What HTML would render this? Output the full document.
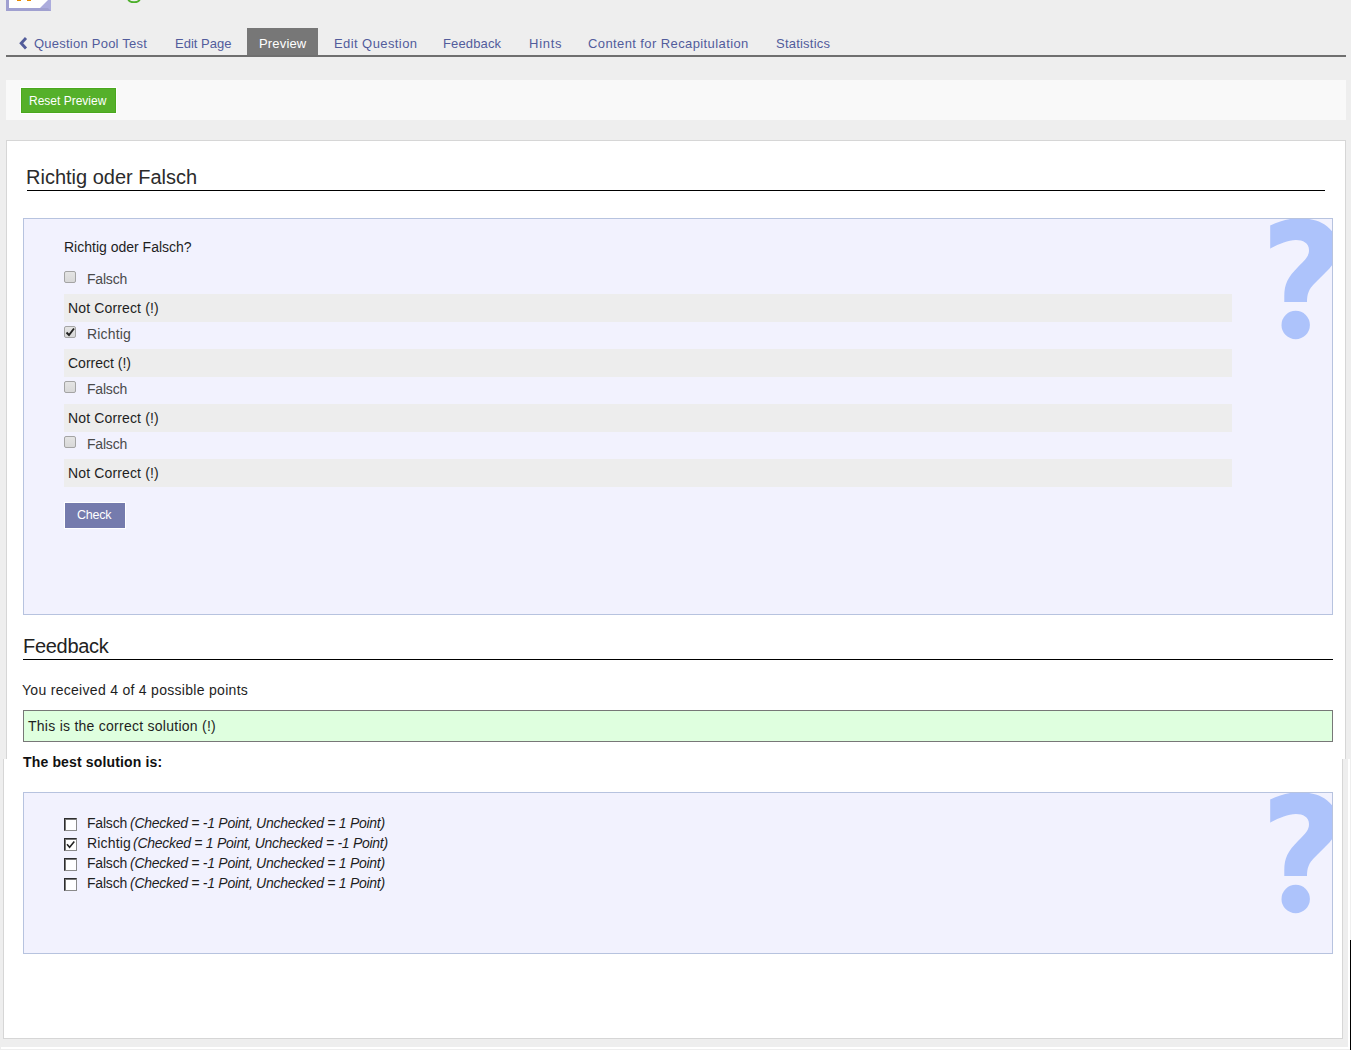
<!DOCTYPE html>
<html><head><meta charset="utf-8"><style>
html,body{margin:0;padding:0}
body{width:1351px;height:1050px;position:relative;overflow:hidden;background:#eeeeee;font-family:"Liberation Sans",sans-serif}
.t{position:absolute;white-space:pre;line-height:1;font-family:"Liberation Sans",sans-serif}
.b{position:absolute;box-sizing:border-box}
</style></head><body>
<div class="b" style="left:6px;top:-20px;width:45px;height:31px;background:#fff;border:3px solid #a0a0d0;border-right-color:#acacdd;border-top:none"></div>
<svg class="b" style="left:0;top:0" width="60" height="12"><polygon points="40,8 48,0 48,8" fill="#acacdd"/><rect x="17" y="0" width="4" height="1" fill="#e88a00"/><rect x="27" y="0" width="4" height="1" fill="#e88a00"/></svg>
<svg class="b" style="left:120px;top:0" width="30" height="6"><path d="M8,-2 C8,1.2 11,2.2 14,2.2 C17,2.2 20,1.2 20,-2" fill="none" stroke="#4caf2a" stroke-width="1.8"/></svg>
<div class="b" style="left:247px;top:28px;width:71px;height:28px;background:#777777"></div>
<div class="b" style="left:6px;top:55px;width:1340px;height:2px;background:#6f6f6f"></div>
<svg class="b" style="left:18px;top:36px" width="12" height="14"><path d="M8,2 L3.2,7.2 L8,12.4" fill="none" stroke="#525c9a" stroke-width="2.9"/></svg>
<div class="t" style="left:34px;top:37px;font-size:13px;letter-spacing:0.235px;color:#525c9c;">Question Pool Test</div>
<div class="t" style="left:175px;top:37px;font-size:13px;letter-spacing:0.0px;color:#525c9c;">Edit Page</div>
<div class="t" style="left:334px;top:37px;font-size:13px;letter-spacing:0.417px;color:#525c9c;">Edit Question</div>
<div class="t" style="left:443px;top:37px;font-size:13px;letter-spacing:0.143px;color:#525c9c;">Feedback</div>
<div class="t" style="left:529px;top:37px;font-size:13px;letter-spacing:0.75px;color:#525c9c;">Hints</div>
<div class="t" style="left:588px;top:37px;font-size:13px;letter-spacing:0.4px;color:#525c9c;">Content for Recapitulation</div>
<div class="t" style="left:776px;top:37px;font-size:13px;letter-spacing:0.222px;color:#525c9c;">Statistics</div>
<div class="t" style="left:259px;top:37px;font-size:13px;letter-spacing:0.167px;color:#ffffff;">Preview</div>
<div class="b" style="left:6px;top:80px;width:1340px;height:40px;background:#f9f9f9"></div>
<div class="b" style="left:20px;top:87px;width:97px;height:27px;background:#fff"></div>
<div class="b" style="left:21px;top:88px;width:95px;height:25px;background:#55b02a;border:1px solid #4aa81e"></div>
<div class="t" style="left:29px;top:95px;font-size:12px;letter-spacing:0.0px;color:#ffffff;">Reset Preview</div>
<div class="b" style="left:6px;top:140px;width:1340px;height:640px;background:#fff;border:1px solid #d6d6d6;border-bottom:none"></div>
<div class="b" style="left:0;top:759px;width:1350px;height:291px;background:#fff"></div>
<div class="b" style="left:0;top:759px;width:1348px;height:288px;background:#eeeeee"></div>
<div class="b" style="left:0;top:1049px;width:1351px;height:1px;background:#eeeeee"></div>
<div class="b" style="left:0;top:759px;width:1px;height:291px;background:#eeeeee"></div>
<div class="b" style="left:3px;top:759px;width:1340px;height:280px;background:#fff;border:1px solid #d6d6d6;border-top:none"></div>
<div class="b" style="left:1350px;top:940px;width:1px;height:110px;background:#000"></div>
<div class="t" style="left:26px;top:167px;font-size:20px;letter-spacing:0.0px;color:#2b2b2b;">Richtig oder Falsch</div>
<div class="b" style="left:27px;top:190px;width:1298px;height:1px;background:#000"></div>
<div class="b" style="left:23px;top:218px;width:1310px;height:397px;background:#f2f2fe;border:1px solid #b7c3df;overflow:hidden"><svg class="b" style="left:-1px;top:-1px;overflow:hidden" width="1310" height="397" viewBox="23 218 1310 397">
<path fill="#adc3fb" d="M1270.2,248.6 L1270.2,225.4 C1280,221 1289,218.3 1299,218.3 C1314,218.3 1326,222 1334,234 C1342,246 1340,258 1326,272 L1314,284 C1309,289 1307,294 1307,302 L1284.3,302 L1284.3,296 C1284.3,284 1288,277 1298,267 C1306,259 1309,256 1309,250 C1309,243 1303,240 1296,240 C1288,240 1280,243.5 1270.2,248.6 Z"/>
<circle cx="1295.7" cy="325" r="14.2" fill="#adc3fb"/></svg></div>
<div class="t" style="left:64px;top:240px;font-size:14px;letter-spacing:0.0px;color:#1e1e1e;">Richtig oder Falsch?</div>
<div class="b" style="left:64px;top:271px;width:12px;height:12px;border:1px solid #a4a4a4;border-radius:2px;background:linear-gradient(#e4e4e4,#d8d8d8)"></div>
<div class="t" style="left:87px;top:272px;font-size:14px;letter-spacing:-0.2px;color:#4a4a4a;">Falsch</div>
<div class="b" style="left:64px;top:294px;width:1168px;height:28px;background:#ededed"></div>
<div class="t" style="left:68px;top:301px;font-size:14px;letter-spacing:0.143px;color:#1e1e1e;">Not Correct (!)</div>
<div class="b" style="left:64px;top:326px;width:12px;height:12px;border:1px solid #a4a4a4;border-radius:2px;background:linear-gradient(#e4e4e4,#d8d8d8)"></div>
<svg class="b" style="left:64px;top:326px" width="12" height="12"><path d="M2.5,6.5 L5,9 L10,2.5" fill="none" stroke="#222" stroke-width="1.9"/></svg>
<div class="t" style="left:87px;top:327px;font-size:14px;letter-spacing:0.167px;color:#4a4a4a;">Richtig</div>
<div class="b" style="left:64px;top:349px;width:1168px;height:28px;background:#ededed"></div>
<div class="t" style="left:68px;top:356px;font-size:14px;letter-spacing:0.0px;color:#1e1e1e;">Correct (!)</div>
<div class="b" style="left:64px;top:381px;width:12px;height:12px;border:1px solid #a4a4a4;border-radius:2px;background:linear-gradient(#e4e4e4,#d8d8d8)"></div>
<div class="t" style="left:87px;top:382px;font-size:14px;letter-spacing:-0.2px;color:#4a4a4a;">Falsch</div>
<div class="b" style="left:64px;top:404px;width:1168px;height:28px;background:#ededed"></div>
<div class="t" style="left:68px;top:411px;font-size:14px;letter-spacing:0.143px;color:#1e1e1e;">Not Correct (!)</div>
<div class="b" style="left:64px;top:436px;width:12px;height:12px;border:1px solid #a4a4a4;border-radius:2px;background:linear-gradient(#e4e4e4,#d8d8d8)"></div>
<div class="t" style="left:87px;top:437px;font-size:14px;letter-spacing:-0.2px;color:#4a4a4a;">Falsch</div>
<div class="b" style="left:64px;top:459px;width:1168px;height:28px;background:#ededed"></div>
<div class="t" style="left:68px;top:466px;font-size:14px;letter-spacing:0.143px;color:#1e1e1e;">Not Correct (!)</div>
<div class="b" style="left:64px;top:502px;width:62px;height:27px;background:#fff"></div>
<div class="b" style="left:65px;top:503px;width:60px;height:25px;background:#757bad"></div>
<div class="t" style="left:77px;top:509px;font-size:12.5px;letter-spacing:-0.25px;color:#ffffff;">Check</div>
<div class="t" style="left:23px;top:636px;font-size:20px;letter-spacing:-0.286px;color:#222222;">Feedback</div>
<div class="b" style="left:23px;top:659px;width:1310px;height:1px;background:#000"></div>
<div class="t" style="left:22px;top:683px;font-size:14px;letter-spacing:0.294px;color:#1e1e1e;">You received 4 of 4 possible points</div>
<div class="b" style="left:23px;top:710px;width:1310px;height:32px;background:#dfffdf;border:1px solid #777777"></div>
<div class="t" style="left:28px;top:719px;font-size:14px;letter-spacing:0.258px;color:#1e1e1e;">This is the correct solution (!)</div>
<div class="t" style="left:23px;top:755px;font-size:14px;font-weight:bold;letter-spacing:0.15px;color:#111111;">The best solution is:</div>
<div class="b" style="left:23px;top:792px;width:1310px;height:162px;background:#f2f2fe;border:1px solid #b7c3df;overflow:hidden"><svg class="b" style="left:-1px;top:-1px;overflow:hidden" width="1310" height="162" viewBox="23 218 1310 162">
<path fill="#adc3fb" d="M1270.2,248.6 L1270.2,225.4 C1280,221 1289,218.3 1299,218.3 C1314,218.3 1326,222 1334,234 C1342,246 1340,258 1326,272 L1314,284 C1309,289 1307,294 1307,302 L1284.3,302 L1284.3,296 C1284.3,284 1288,277 1298,267 C1306,259 1309,256 1309,250 C1309,243 1303,240 1296,240 C1288,240 1280,243.5 1270.2,248.6 Z"/>
<circle cx="1295.7" cy="325" r="14.2" fill="#adc3fb"/></svg></div>
<div class="b" style="left:64px;top:818px;width:13px;height:13px;background:#fff;border-style:solid;border-width:1px;border-color:#2e2e2e #8a8a8a #8a8a8a #2e2e2e;box-shadow:inset 1px 1px 0 #777"></div>
<div class="t" style="left:87px;top:816px;font-size:14px;letter-spacing:-0.2px;color:#1e1e1e;">Falsch</div>
<div class="t" style="left:130px;top:816px;font-size:14px;font-style:italic;letter-spacing:-0.275px;color:#1e1e1e;">(Checked = -1 Point, Unchecked = 1 Point)</div>
<div class="b" style="left:64px;top:838px;width:13px;height:13px;background:#fff;border-style:solid;border-width:1px;border-color:#2e2e2e #8a8a8a #8a8a8a #2e2e2e;box-shadow:inset 1px 1px 0 #777"></div>
<svg class="b" style="left:64px;top:838px" width="13" height="13"><path d="M3,6.3 L5.6,9.2 L10.3,3.6" fill="none" stroke="#222" stroke-width="1.6"/></svg>
<div class="t" style="left:87px;top:836px;font-size:14px;letter-spacing:0.167px;color:#1e1e1e;">Richtig</div>
<div class="t" style="left:133px;top:836px;font-size:14px;font-style:italic;letter-spacing:-0.275px;color:#1e1e1e;">(Checked = 1 Point, Unchecked = -1 Point)</div>
<div class="b" style="left:64px;top:858px;width:13px;height:13px;background:#fff;border-style:solid;border-width:1px;border-color:#2e2e2e #8a8a8a #8a8a8a #2e2e2e;box-shadow:inset 1px 1px 0 #777"></div>
<div class="t" style="left:87px;top:856px;font-size:14px;letter-spacing:-0.2px;color:#1e1e1e;">Falsch</div>
<div class="t" style="left:130px;top:856px;font-size:14px;font-style:italic;letter-spacing:-0.275px;color:#1e1e1e;">(Checked = -1 Point, Unchecked = 1 Point)</div>
<div class="b" style="left:64px;top:878px;width:13px;height:13px;background:#fff;border-style:solid;border-width:1px;border-color:#2e2e2e #8a8a8a #8a8a8a #2e2e2e;box-shadow:inset 1px 1px 0 #777"></div>
<div class="t" style="left:87px;top:876px;font-size:14px;letter-spacing:-0.2px;color:#1e1e1e;">Falsch</div>
<div class="t" style="left:130px;top:876px;font-size:14px;font-style:italic;letter-spacing:-0.275px;color:#1e1e1e;">(Checked = -1 Point, Unchecked = 1 Point)</div>
</body></html>
